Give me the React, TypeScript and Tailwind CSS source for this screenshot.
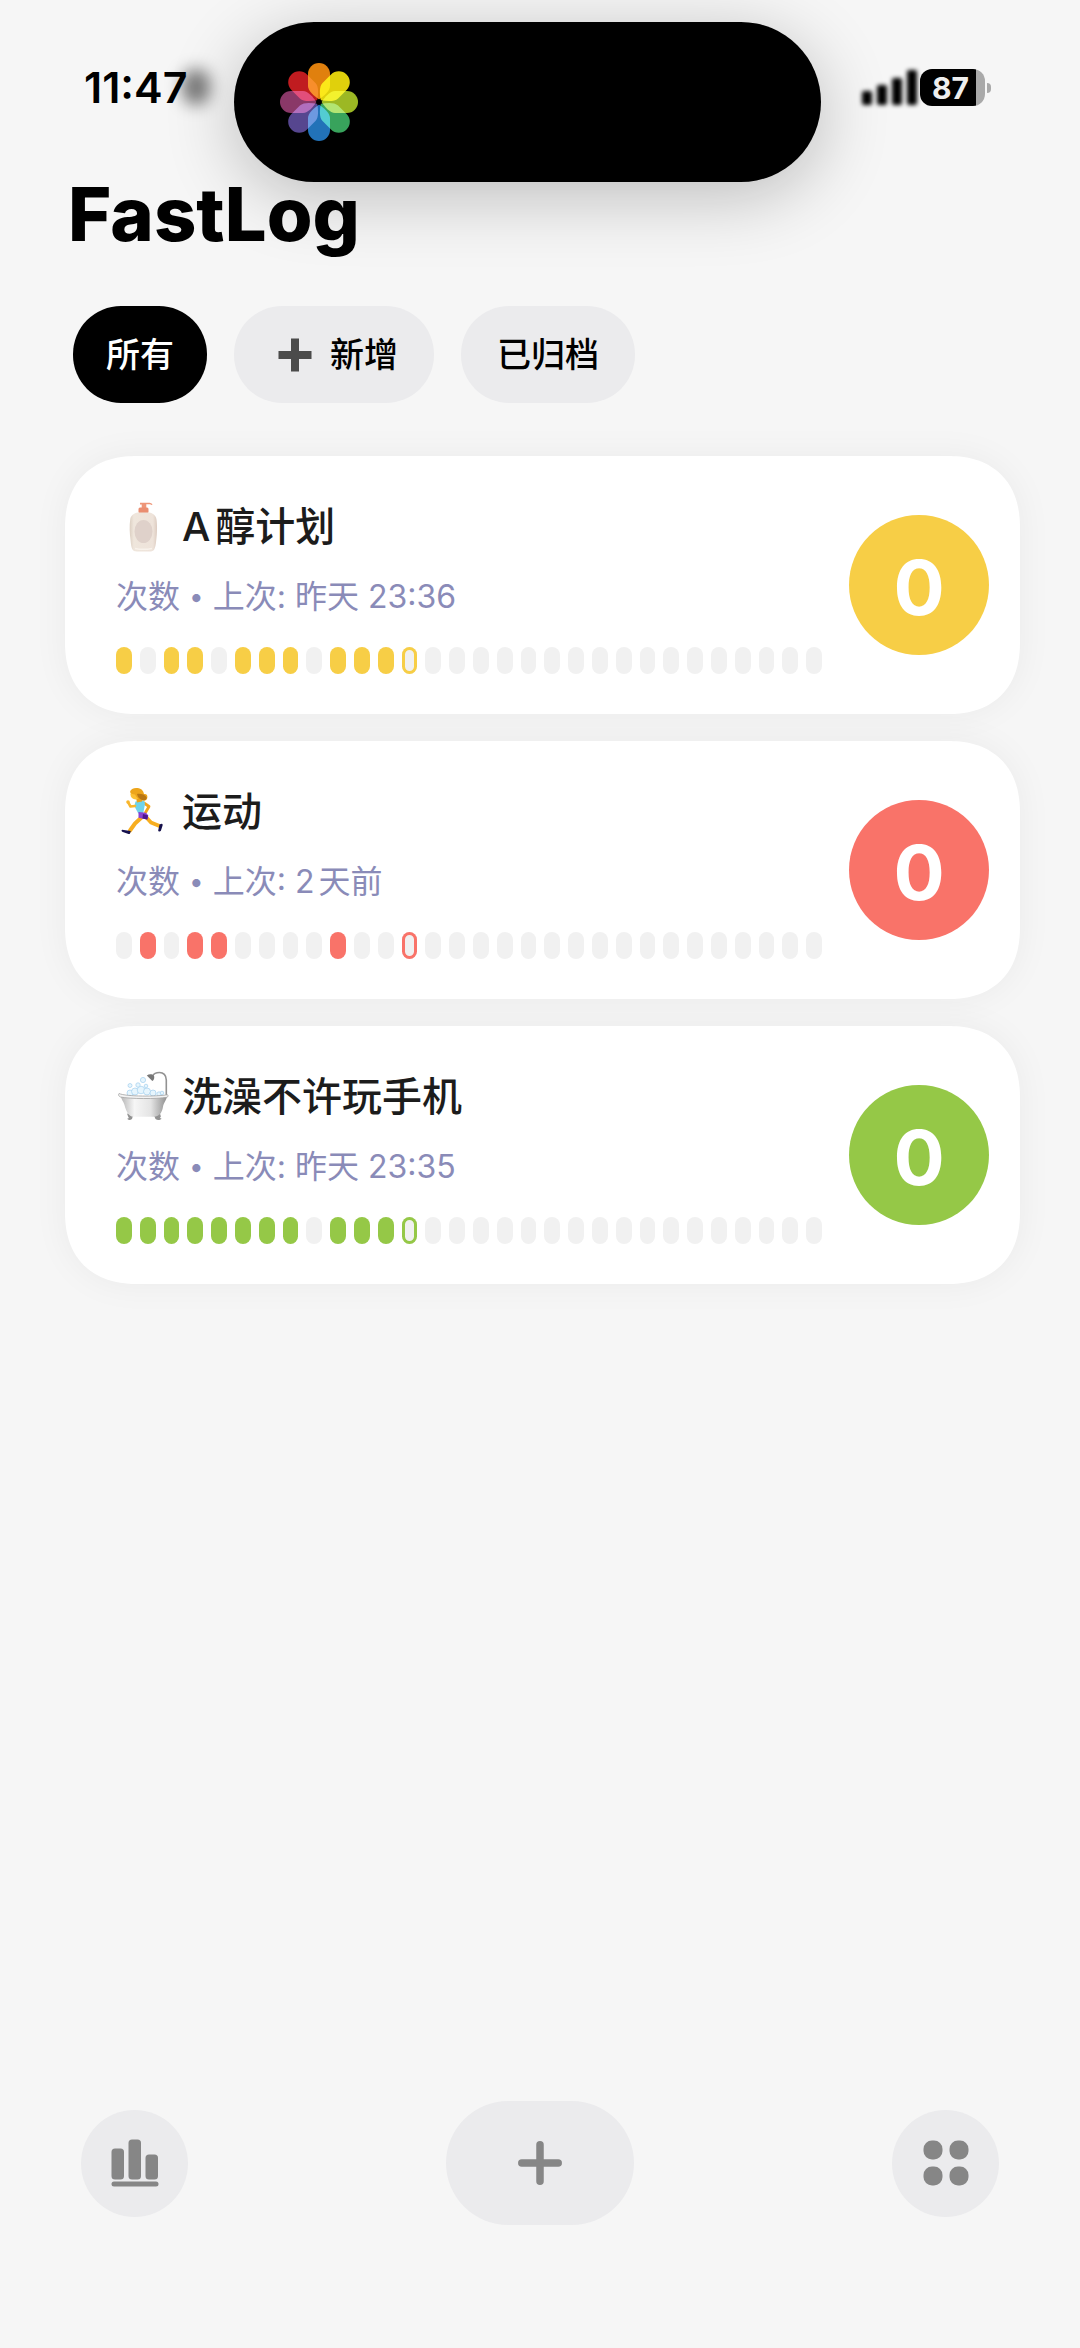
import React from "react";

const FONT = "font-['Inter','Noto_Sans_CJK_SC',sans-serif]";

type Tone = "yellow" | "red" | "green";

const fills: Record<Tone, string> = {
  yellow: "bg-[#f7ce46]",
  red: "bg-[#f97369]",
  green: "bg-[#95c847]",
};

const rings: Record<Tone, string> = {
  yellow: "ring-[#f7ce46]",
  red: "ring-[#f97369]",
  green: "ring-[#95c847]",
};

function PhotosIcon() {
  const petals = ["#e0800e", "#e0d00c", "#9cb824", "#38a35c", "#2272b8", "#56468f", "#8a3868", "#c01c20"];
  return (
    <svg viewBox="-42 -42 84 84" className="h-[84px] w-[84px] isolate" aria-hidden="true">
      {petals.map((c, i) => (
        <path key={c} d="M0 -39a11 11 0 0 1 11 11V-16C11 -11 5 -6 0 -2.500C-5 -6 -11 -11 -11 -16V-28a11 11 0 0 1 11-11z" fill={c} transform={`rotate(${i * 45})`} style={{ mixBlendMode: "screen" }} />
      ))}
      <circle r="2.500" fill="#000" />
    </svg>
  );
}

function LotionIcon() {
  return (
    <svg viewBox="0 0 52 52" className="h-[52px] w-[52px] shrink-0" aria-hidden="true">
      <defs>
        <linearGradient id="lotion" x1="0" x2="1">
          <stop offset="0" stopColor="#dccfc2" />
          <stop offset=".15" stopColor="#efe6dc" />
          <stop offset=".85" stopColor="#eee3da" />
          <stop offset="1" stopColor="#dccbc0" />
        </linearGradient>
      </defs>
      <path d="M24 1.8h8c2.500 0 4 .5 4.500 1.700l-1 .6c-1-.8-2-.8-3.500-.8h-1.700V7h-4.600V3.600L24 3.400z" fill="#ee9578" />
      <rect x="22.500" y="6.500" width="10" height="5.800" rx="1.500" fill="#ea8d70" />
      <path d="M22 11.500h11c4 .5 7 3 7.500 7 .8 5 .8 14-.3 21-.3 4-.9 7-2 9-1 1.500-2.500 2-4.500 2H21c-2.500 0-4-.8-4.800-2.500-1-2-1.300-5-1.600-8.500-1-7-1.300-15-.4-21 .6-4 3.500-6.500 7.800-7z" fill="url(#lotion)" />
      <ellipse cx="27.500" cy="30.500" rx="9" ry="11.500" fill="#dfd1ca" />
      <path d="M19 47.500c5 1 12 1 17 0" stroke="#f8f2eb" strokeWidth="1.500" fill="none" />
    </svg>
  );
}

function RunnerIcon() {
  return (
    <svg viewBox="0 0 52 52" className="h-[52px] w-[52px] shrink-0" aria-hidden="true" fill="none" strokeLinecap="round" strokeLinejoin="round">
      <path d="M28 17l5 3.500-3.500 6" stroke="#f2a51c" strokeWidth="2.800" />
      <path d="M30 31l5 5.500 8.500 3.500" stroke="#f7ae20" strokeWidth="3.800" />
      <path d="M25.500 31.500l-6.500 6-5 7" stroke="#f7ae20" strokeWidth="4" />
      <path d="M43.500 38.500l2.200-.8c1 0 1.200 1 .8 2l-1.600 5c-.7 1-2.600 1-2.700-.3z" fill="#15104c" />
      <path d="M6.200 43.800l5 .6 3.600.7-.8 2.400c-.4.9-1.300.6-2.200.2l-5-1.600c-1.400-.5-1.700-2-.6-2.300z" fill="#15104c" />
      <path d="M19.500 15.500l7.500-1c2 .6 2 2.500 1.800 4.500l-1.500 8-5 .5-4-7.500z" fill="#6fd3ea" />
      <path d="M22.500 26l7.500.8 2.300 2.700-.8 4-4.500-.8-4.500-1z" fill="#8a3fd0" />
      <path d="M27 28l5 1.500-.7 4-4.800-1z" fill="#4c1590" />
      <path d="M19 20l-4.500.5-2.200-3.800" stroke="#f9b62c" strokeWidth="2.600" />
      <circle cx="12" cy="16" r="1.800" fill="#f9b62c" />
      <path d="M20 12h6v3.500l-5 1z" fill="#eaa017" />
      <circle cx="19.500" cy="8.500" r="5" fill="#fcc034" />
      <path d="M14 6c.6-3 4-4.500 7.500-4 4 .5 6 3 6.500 6 2.500-.4 3.800 1.200 3.300 4-.5 2-2.400 3.200-4.800 2.600-3.500-.8-6-2.600-7.500-6.100-2.500-.2-4.300-.8-5-2.500z" fill="#eda51b" />
      <path d="M21 8c3-.6 8 .3 9.800 3.500-.2 2.300-2.200 3.300-4.300 2.700C23.500 13.500 21.700 11 21 8z" fill="#b97714" />
    </svg>
  );
}

function BathIcon() {
  const bubbles: [number, number, number][] = [
    [14, 22, 3], [19, 20.500, 3.500], [25, 19, 3.800], [31, 20.500, 3.500], [37, 22, 3], [43, 23, 2.200],
    [22, 14, 2.200], [27, 9, 2.600], [14, 14.500, 2], [30, 15, 1.800], [46, 22, 1.800],
  ];
  return (
    <svg viewBox="0 0 52 52" className="h-[52px] w-[52px] shrink-0 overflow-visible" aria-hidden="true">
      <defs>
        <linearGradient id="tub" x1="0" x2="1">
          <stop offset="0" stopColor="#b5b5b5" />
          <stop offset=".3" stopColor="#f6f6f6" />
          <stop offset=".65" stopColor="#e4e4e4" />
          <stop offset="1" stopColor="#8f8f8f" />
        </linearGradient>
      </defs>
      <path d="M50.300 24V9c0-5-3-7.500-6.800-7.500S37.500 3 36.500 5" fill="none" stroke="#929292" strokeWidth="1.600" />
      <path d="M30.800 4.500c2.500-1.700 6-1.500 7.300.6.600 2-.3 4.300-1.800 5z" fill="#777" />
      {bubbles.map(([x, y, r], i) => (
        <circle key={i} cx={x} cy={y} r={r} fill="#e6f5fd" stroke="#a3d0ee" strokeWidth=".7" />
      ))}
      <path d="M11 42.500l6 2-1 3.500c-2 1.500-4.500 1-4.700-.4 1.500 0 1.700-1 .9-1.800z" fill="#929292" />
      <path d="M44 42.500l-6 2 1.500 3.500c2 1.500 5.500 1 6-.6-1.600 0-1.800-1-.6-2z" fill="#929292" />
      <path d="M4.500 25c1.500 4.500 3 5.500 4 9 1.500 6 4 11.500 9 11.800h20c6-.3 8.500-4 9.500-10 .6-4.500 3.500-6 4-10.800z" fill="url(#tub)" />
      <path d="M3 22.500c7 3.200 39 3.200 48.500 1.200.9.600.6 2.300-.5 2.600-10 1.700-37 1.700-46.500-.3-1.700-.6-2.500-2.300-1.500-3.500z" fill="#f4f4f4" stroke="#a2a2a2" strokeWidth=".8" />
    </svg>
  );
}

interface Habit {
  name: string;
  last: string;
  tone: Tone;
  days: string;
  icon: React.ReactNode;
}

/* days: one character per day; x = done, o = today, . = empty */
const habits: Habit[] = [
  { name: "A醇计划", last: "昨天 23:36", tone: "yellow", days: "x.xx.xxx.xxxo.................", icon: <LotionIcon /> },
  { name: "运动", last: "2天前", tone: "red", days: ".x.xx....x..o.................", icon: <RunnerIcon /> },
  { name: "洗澡不许玩手机", last: "昨天 23:35", tone: "green", days: "xxxxxxxx.xxxo.................", icon: <BathIcon /> },
];

function HabitCard({ habit }: { habit: Habit }) {
  return (
    <article className="flex items-center gap-[27px] rounded-[72px] bg-white pr-[31px] pl-[51px] shadow-[0_0_36px_rgba(0,0,0,0.05)] [corner-shape:superellipse(1.2)]">
      <div className="flex min-w-0 flex-1 flex-col pt-[45px] pb-10">
        <div className="flex h-[52px] items-center gap-[14px]">
          {habit.icon}
          <h2 className="text-[40px] leading-[52px] font-medium text-[#1c1c1c] [text-autospace:normal]">{habit.name}</h2>
        </div>
        <p className="mt-6 text-[32px] leading-10 text-[#8a8bb8] [text-autospace:normal]">
          次数 <span className="align-[2px] text-[26px] leading-none">•</span> 上次: {habit.last}
        </p>
        <div className="mt-[30px] flex gap-2">
          {habit.days.split("").map((d, i) => (
            <span
              key={i}
              className={`h-[27px] flex-1 rounded-full ${
                d === "x" ? fills[habit.tone] : d === "o" ? `bg-[#f0f0f0] ring-3 ring-inset ${rings[habit.tone]}` : "bg-[#f1f1f1]"
              }`}
            />
          ))}
        </div>
      </div>
      <button className={`flex h-[140px] w-[140px] shrink-0 items-center justify-center rounded-full pt-1 text-[76px] leading-none font-bold text-white ${fills[habit.tone]}`}>
        0
      </button>
    </article>
  );
}

function StatusBar() {
  return (
    <div className="relative flex h-[172px] items-start justify-between pr-[89px] pl-[84px]">
      <div className="absolute top-[22px] left-[234px] right-[259px] flex h-40 items-center rounded-[80px] bg-black pl-[43px] shadow-[0_14px_70px_rgba(0,0,0,0.24)]">
        <PhotosIcon />
      </div>
      <div className="relative mt-[61px]">
        <span className="text-[43px] leading-[52px] font-semibold text-black">11:47</span>
        <span className="absolute top-2 left-[98px] h-9 w-7 rounded-full bg-black/50 blur-[8px]" />
      </div>
      <div className="relative mt-[69px] flex items-center gap-[2px]">
        <svg viewBox="0 0 56 37" className="h-[37px] w-14 overflow-visible blur-[2px]" aria-hidden="true">
          <rect x="0" y="22" width="10" height="14" rx="2" />
          <rect x="15" y="16" width="10" height="20" rx="2" />
          <rect x="30" y="9" width="10" height="27" rx="2" />
          <rect x="45" y="1" width="10" height="35" rx="2" />
        </svg>
        <span className="flex h-[37px] w-[65px] items-center justify-center overflow-hidden rounded-xl bg-linear-to-r from-black from-86% to-[#a9a9a9] to-86% pr-1 text-[30px] leading-none font-bold text-[#eee]">
          87
        </span>
        <span className="h-[10px] w-1 rounded-r-full bg-[#a9a9a9]" />
      </div>
    </div>
  );
}

export default function App() {
  return (
    <div className={`flex min-h-screen flex-col bg-[#f6f6f6] ${FONT}`}>
      <StatusBar />
      <main className="relative flex flex-1 flex-col">
        <h1 className="pl-[68px] text-[74px] leading-[84px] font-extrabold text-black">FastLog</h1>
        <nav className="mt-[50px] flex gap-[27px] pl-[73px] text-[34px] font-medium">
          <button className="h-[97px] rounded-[48px] bg-black px-[33px] text-white">所有</button>
          <button className="flex h-[97px] items-center gap-[18px] rounded-[48px] bg-[#ebebed] pr-9 pl-11 text-black">
            <svg viewBox="0 0 34 34" className="h-[34px] w-[34px]" aria-hidden="true">
              <path d="M13 0.500h8V13h12.500v8H21v12.500h-8V21H.5v-8H13z" fill="#4b4b4b" />
            </svg>
            新增
          </button>
          <button className="h-[97px] rounded-[48px] bg-[#ebebed] px-9 text-black">已归档</button>
        </nav>
        <section className="mt-[53px] flex flex-col gap-[27px] pr-[60px] pl-[65px]">
          {habits.map((h) => (
            <HabitCard key={h.name} habit={h} />
          ))}
        </section>
      </main>
      <footer className="flex items-center justify-between px-[81px] pb-[123px]">
        <button aria-label="统计" className="flex h-[107px] w-[107px] items-center justify-center rounded-full bg-[#ebebed]">
          <svg viewBox="0 0 48 48" className="h-12 w-12" fill="#868686" aria-hidden="true">
            <rect x="0.500" y="9.500" width="12.500" height="31" rx="3.500" />
            <rect x="17.500" y="0.500" width="12.500" height="40" rx="3.500" />
            <rect x="34.500" y="15.500" width="12.500" height="25" rx="3.500" />
            <rect x="0.500" y="42.500" width="47" height="5" rx="2.500" />
          </svg>
        </button>
        <button aria-label="添加" className="flex h-[124px] w-[188px] items-center justify-center rounded-[62px] bg-[#ebebed]">
          <svg viewBox="0 0 44 44" className="h-11 w-11" stroke="#868686" strokeWidth="7.500" strokeLinecap="round" aria-hidden="true">
            <path d="M22 3.800v36.400M3.800 22h36.400" />
          </svg>
        </button>
        <button aria-label="更多" className="flex h-[107px] w-[107px] items-center justify-center rounded-full bg-[#ebebed]">
          <svg viewBox="0 0 46 46" className="h-[46px] w-[46px]" fill="#868686" aria-hidden="true">
            <rect x="0.500" y="0.500" width="19" height="19" rx="8.500" />
            <rect x="26.500" y="0.500" width="19" height="19" rx="8.500" />
            <rect x="0.500" y="26.500" width="19" height="19" rx="8.500" />
            <rect x="26.500" y="26.500" width="19" height="19" rx="8.500" />
          </svg>
        </button>
      </footer>
    </div>
  );
}
